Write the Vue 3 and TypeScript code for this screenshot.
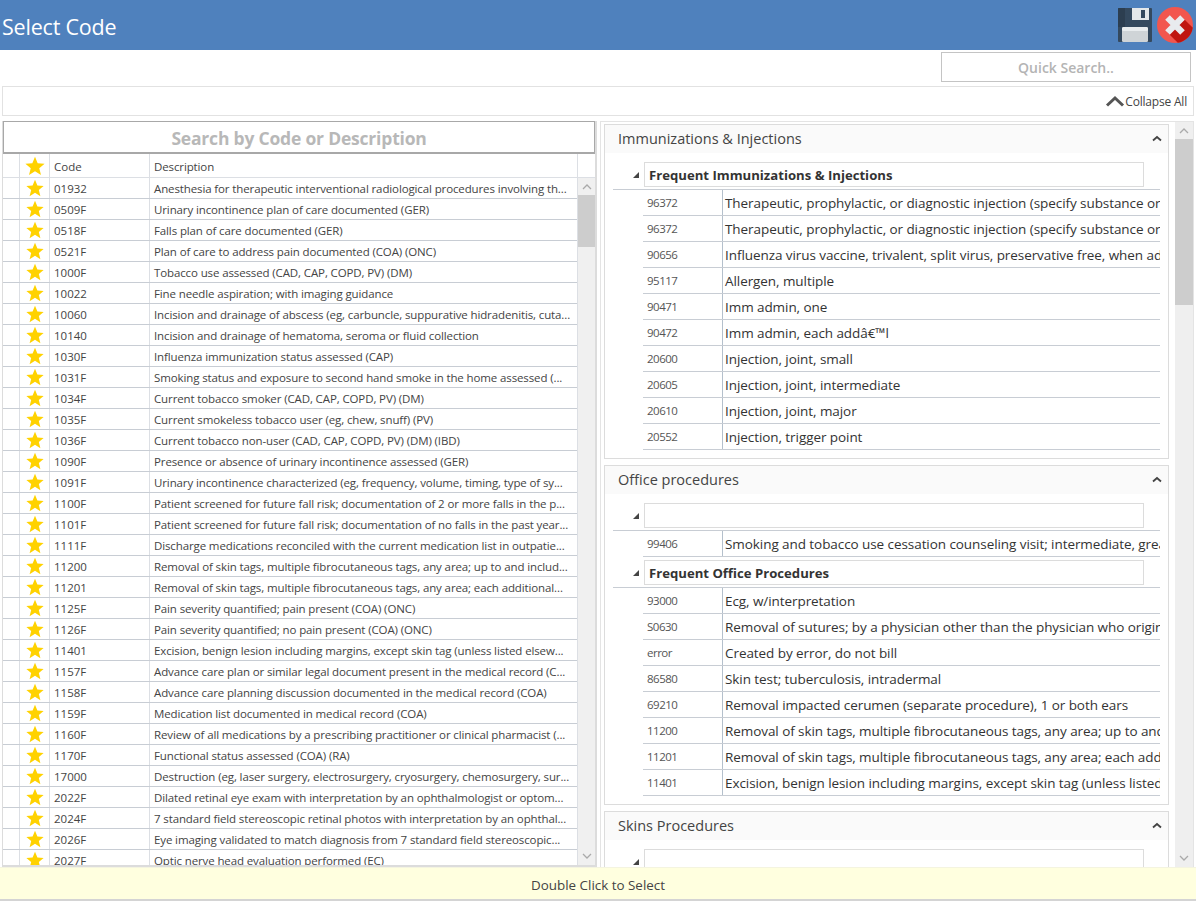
<script setup lang="ts">
const leftRows: [string, string][] = [
  ['01932', 'Anesthesia for therapeutic interventional radiological procedures involving th...'],
  ['0509F', 'Urinary incontinence plan of care documented (GER)'],
  ['0518F', 'Falls plan of care documented (GER)'],
  ['0521F', 'Plan of care to address pain documented (COA) (ONC)'],
  ['1000F', 'Tobacco use assessed (CAD, CAP, COPD, PV) (DM)'],
  ['10022', 'Fine needle aspiration; with imaging guidance'],
  ['10060', 'Incision and drainage of abscess (eg, carbuncle, suppurative hidradenitis, cuta...'],
  ['10140', 'Incision and drainage of hematoma, seroma or fluid collection'],
  ['1030F', 'Influenza immunization status assessed (CAP)'],
  ['1031F', 'Smoking status and exposure to second hand smoke in the home assessed (...'],
  ['1034F', 'Current tobacco smoker (CAD, CAP, COPD, PV) (DM)'],
  ['1035F', 'Current smokeless tobacco user (eg, chew, snuff) (PV)'],
  ['1036F', 'Current tobacco non-user (CAD, CAP, COPD, PV) (DM) (IBD)'],
  ['1090F', 'Presence or absence of urinary incontinence assessed (GER)'],
  ['1091F', 'Urinary incontinence characterized (eg, frequency, volume, timing, type of sy...'],
  ['1100F', 'Patient screened for future fall risk; documentation of 2 or more falls in the p...'],
  ['1101F', 'Patient screened for future fall risk; documentation of no falls in the past year...'],
  ['1111F', 'Discharge medications reconciled with the current medication list in outpatie...'],
  ['11200', 'Removal of skin tags, multiple fibrocutaneous tags, any area; up to and includ...'],
  ['11201', 'Removal of skin tags, multiple fibrocutaneous tags, any area; each additional...'],
  ['1125F', 'Pain severity quantified; pain present (COA) (ONC)'],
  ['1126F', 'Pain severity quantified; no pain present (COA) (ONC)'],
  ['11401', 'Excision, benign lesion including margins, except skin tag (unless listed elsew...'],
  ['1157F', 'Advance care plan or similar legal document present in the medical record (C...'],
  ['1158F', 'Advance care planning discussion documented in the medical record (COA)'],
  ['1159F', 'Medication list documented in medical record (COA)'],
  ['1160F', 'Review of all medications by a prescribing practitioner or clinical pharmacist (...'],
  ['1170F', 'Functional status assessed (COA) (RA)'],
  ['17000', 'Destruction (eg, laser surgery, electrosurgery, cryosurgery, chemosurgery, sur...'],
  ['2022F', 'Dilated retinal eye exam with interpretation by an ophthalmologist or optom...'],
  ['2024F', '7 standard field stereoscopic retinal photos with interpretation by an ophthal...'],
  ['2026F', 'Eye imaging validated to match diagnosis from 7 standard field stereoscopic...'],
  ['2027F', 'Optic nerve head evaluation performed (EC)'],
]

interface Group { name: string; rows: [string, string][] }
interface Card { title: string; groups: Group[] }

const cards: Card[] = [
  {
    title: 'Immunizations & Injections',
    groups: [
      {
        name: 'Frequent Immunizations & Injections',
        rows: [
          ['96372', 'Therapeutic, prophylactic, or diagnostic injection (specify substance or drug); subcutaneous'],
          ['96372', 'Therapeutic, prophylactic, or diagnostic injection (specify substance or drug); subcutaneous'],
          ['90656', 'Influenza virus vaccine, trivalent, split virus, preservative free, when administered to individuals'],
          ['95117', 'Allergen, multiple'],
          ['90471', 'Imm admin, one'],
          ['90472', 'Imm admin, each addâ€™l'],
          ['20600', 'Injection, joint, small'],
          ['20605', 'Injection, joint, intermediate'],
          ['20610', 'Injection, joint, major'],
          ['20552', 'Injection, trigger point'],
        ],
      },
    ],
  },
  {
    title: 'Office procedures',
    groups: [
      {
        name: '',
        rows: [['99406', 'Smoking and tobacco use cessation counseling visit; intermediate, greater than 3 minutes']],
      },
      {
        name: 'Frequent Office Procedures',
        rows: [
          ['93000', 'Ecg, w/interpretation'],
          ['S0630', 'Removal of sutures; by a physician other than the physician who originally closed the wound'],
          ['error', 'Created by error, do not bill'],
          ['86580', 'Skin test; tuberculosis, intradermal'],
          ['69210', 'Removal impacted cerumen (separate procedure), 1 or both ears'],
          ['11200', 'Removal of skin tags, multiple fibrocutaneous tags, any area; up to and including 15 lesions'],
          ['11201', 'Removal of skin tags, multiple fibrocutaneous tags, any area; each additional 10 lesions'],
          ['11401', 'Excision, benign lesion including margins, except skin tag (unless listed elsewhere), trunk'],
        ],
      },
    ],
  },
  {
    title: 'Skins Procedures',
    groups: [{ name: '', rows: [] }],
  },
]
</script>

<template>
  <div class="app">
    <header class="titlebar">
      <span class="title">Select Code</span>
      <div class="actions">
        <svg width="36" height="36" viewBox="0 0 36 36">
          <path d="M2 1h32a1 1 0 0 1 1 1v32a1 1 0 0 1-1 1H2a1 1 0 0 1-1-1V2a1 1 0 0 1 1-1z" fill="#34495e" />
          <path d="M2 1h6v19H1V2a1 1 0 0 1 1-1z" fill="#2c3e50" />
          <rect x="15" y="1" width="17" height="12" fill="#e4e8ea" />
          <rect x="24" y="3" width="4" height="8" fill="#34495e" />
          <rect x="5" y="20" width="26" height="15" rx="1.5" fill="#cfd4d7" />
          <rect x="5" y="20" width="26" height="4" rx="1.5" fill="#e8ecee" />
        </svg>
        <svg width="36" height="36" viewBox="0 0 36 36">
          <circle cx="18" cy="18" r="18" fill="#f2564e" />
          <path d="M25.500 10.500 35.800 20.800A18 18 0 0 1 20.800 35.800L10.500 25.500z" fill="#c0150f" />
          <path d="M10.500 10.500 25.500 25.500M25.500 10.500 10.500 25.500" fill="none" stroke="#e8ebee" stroke-width="6.500" />
        </svg>
      </div>
    </header>

    <div class="search-row">
      <div class="quick">Quick Search..</div>
    </div>

    <div class="collapse-bar">
      <svg width="20" height="12" viewBox="0 0 20 12"><path d="M2 10.500 10 3l8 7.500" fill="none" stroke="#555" stroke-width="3" /></svg>
      <span>Collapse All</span>
    </div>

    <main class="main">
      <section class="left">
        <div class="search-code">Search by Code or Description</div>
        <div class="grid-wrap">
          <div class="grid">
            <div class="row head">
              <div class="c-blank"></div>
              <div class="c-star">
                <svg width="20" height="20" viewBox="0 0 24 24"><path d="M12 1l3.200 7.800 8.300.6-6.400 5.300 2.100 8.200L12 18.400l-7.200 4.500 2.100-8.200L.5 9.400l8.300-.6z" fill="#ffd200" /></svg>
              </div>
              <div class="c-code">Code</div>
              <div class="c-desc">Description</div>
            </div>
            <div v-for="(r, i) in leftRows" :key="i" class="row">
              <div class="c-blank"></div>
              <div class="c-star">
                <svg width="18" height="18" viewBox="0 0 24 24"><path d="M12 1l3.200 7.800 8.300.6-6.400 5.300 2.100 8.200L12 18.400l-7.200 4.500 2.100-8.200L.5 9.400l8.300-.6z" fill="#ffd200" /></svg>
              </div>
              <div class="c-code">{{ r[0] }}</div>
              <div class="c-desc">{{ r[1] }}</div>
            </div>
          </div>
          <div class="scroll left-scroll">
            <div class="head-gap"></div>
            <div class="track">
              <svg class="arrow" width="18" height="17" viewBox="0 0 18 17"><path d="M5 11l4-4 4 4" fill="none" stroke="#aaa" stroke-width="1.300" /></svg>
              <div class="thumb left-thumb"></div>
              <div class="spring"></div>
              <svg class="arrow" width="18" height="17" viewBox="0 0 18 17"><path d="M5 6l4 4 4-4" fill="none" stroke="#aaa" stroke-width="1.300" /></svg>
            </div>
          </div>
        </div>
      </section>

      <section class="right">
        <div class="cards">
          <div v-for="card in cards" :key="card.title" class="card">
            <div class="card-head">
              <span>{{ card.title }}</span>
              <svg width="10" height="7" viewBox="0 0 10 7"><path d="M1 5.500 5 2l4 3.500" fill="none" stroke="#444" stroke-width="1.800" /></svg>
            </div>
            <div class="card-body">
              <div v-for="(g, gi) in card.groups" :key="gi" class="group">
                <div class="group-head">
                  <i class="tri"></i>
                  <div class="group-name">{{ g.name }}</div>
                </div>
                <div v-for="(r, ri) in g.rows" :key="ri" class="code-row">
                  <div class="rc">{{ r[0] }}</div>
                  <div class="rd">{{ r[1] }}</div>
                </div>
              </div>
            </div>
          </div>
        </div>
        <div class="scroll right-scroll">
          <div class="track">
            <svg class="arrow" width="18" height="17" viewBox="0 0 18 17"><path d="M5 11l4-4 4 4" fill="none" stroke="#aaa" stroke-width="1.300" /></svg>
            <div class="thumb right-thumb"></div>
            <div class="spring"></div>
            <svg class="arrow" width="18" height="17" viewBox="0 0 18 17"><path d="M5 6l4 4 4-4" fill="none" stroke="#aaa" stroke-width="1.300" /></svg>
          </div>
        </div>
      </section>
    </main>

    <footer class="footer">Double Click to Select</footer>
  </div>
</template>

<style>
html, body { margin: 0; background: #fff; overflow: hidden; }
</style>

<style scoped>
.app {
  width: 1196px;
  height: 901px;
  display: flex;
  flex-direction: column;
  overflow: hidden;
  font-family: "Open Sans", "Noto Sans", sans-serif;
  color: #444;
  background: #fff;
}
.titlebar {
  height: 50px;
  flex: none;
  background: #4f81bd;
  display: flex;
  align-items: center;
  justify-content: space-between;
  padding: 0 3px 0 2px;
}
.title { color: #fff; font-size: 21.5px; letter-spacing: -0.2px; padding-top: 2px; }
.actions { display: flex; gap: 4px; }
.actions svg { display: block; }
.search-row {
  height: 36px;
  flex: none;
  display: flex;
  justify-content: flex-end;
  align-items: flex-end;
  padding-right: 5px;
  box-sizing: border-box;
  padding-bottom: 4px;
}
.quick {
  width: 250px;
  height: 30px;
  box-sizing: border-box;
  border: 1px solid #c4c4c4;
  color: #b4b4b4;
  font-size: 14px;
  font-weight: 600;
  display: flex;
  align-items: center;
  justify-content: center;
}
.collapse-bar {
  height: 30px;
  flex: none;
  box-sizing: border-box;
  margin: 0 2px;
  border: 1px solid #e2e2e2;
  display: flex;
  align-items: center;
  justify-content: flex-end;
  padding: 0 6px 0 0;
  font-size: 12px;
  letter-spacing: -0.2px;
}
.main {
  flex: 1;
  min-height: 0;
  display: flex;
  padding: 5px 2px 0 2px;
  gap: 3px;
  overflow: hidden;
}
.left {
  width: 595px;
  flex: none;
  box-sizing: border-box;
  display: flex;
  flex-direction: column;
  min-height: 0;
  overflow: hidden;
  border-left: 1px solid #dcdcdc;
  border-right: 2px solid #dcdcdc;
  border-bottom: 2px solid #dcdcdc;
}
.search-code {
  height: 33px;
  flex: none;
  box-sizing: border-box;
  border: 1px solid #a8a8a8;
  border-bottom-width: 2px;
  color: #b8b8b8;
  font-size: 17.5px;
  font-weight: 700;
  display: flex;
  align-items: center;
  justify-content: center;
  letter-spacing: -0.2px;
  padding-top: 2px;
}
.grid-wrap {
  flex: 1;
  min-height: 0;
  display: flex;
  overflow: hidden;
}
.grid {
  width: 574px;
  flex: none;
  overflow: hidden;
}
.row {
  display: flex;
  height: 21px;
  box-sizing: border-box;
  border-bottom: 1px solid #c8cdd4;
  font-size: 11.5px;
  line-height: 22px;
  white-space: nowrap;
}
.row.head {
  height: 24px;
  line-height: 26px;
  border-bottom-color: #dcdfe4;
}
.c-blank { width: 17px; flex: none; box-sizing: border-box; border-right: 1px solid #dcdfe4; }
.c-star {
  width: 30px;
  flex: none;
  box-sizing: border-box;
  border-right: 1px solid #dcdfe4;
  display: flex;
  align-items: center;
  justify-content: center;
}
.c-code {
  width: 100px;
  flex: none;
  box-sizing: border-box;
  border-right: 1px solid #dcdfe4;
  padding-left: 4px;
}
.c-desc {
  flex: 1;
  min-width: 0;
  padding-left: 4px;
  overflow: hidden;
  letter-spacing: -0.12px;
}
.scroll { flex: none; width: 18px; display: flex; flex-direction: column; }
.head-gap {
  height: 24px;
  flex: none;
  box-sizing: border-box;
  border-bottom: 1px solid #dcdfe4;
}
.left-scroll { border-left: 1px solid #dcdfe4; box-sizing: content-box; width: 17px; }
.track {
  flex: 1;
  min-height: 0;
  background: #efefef;
  display: flex;
  flex-direction: column;
}
.left-scroll .track { background: #f0f0f0; }
.arrow { display: block; flex: none; }
.thumb { background: #cdcdcd; flex: none; }
.left-thumb { height: 52px; }
.right-thumb { height: 166px; }
.spring { flex: 1; }
.right {
  flex: 1;
  min-width: 0;
  display: flex;
  border: 1px solid #e4e4e4;
  border-bottom: none;
  padding-left: 3px;
  overflow: hidden;
}
.cards {
  flex: 1;
  min-width: 0;
  overflow: hidden;
  padding: 2px 6px 0 0;
  display: flex;
  flex-direction: column;
  gap: 6px;
}
.card {
  flex: none;
  border: 1px solid #dcdcdc;
  padding-bottom: 8px;
}
.card-head {
  height: 28px;
  box-sizing: border-box;
  background: #fafafa;
  display: flex;
  align-items: center;
  justify-content: space-between;
  padding: 0 6px 2px 13px;
  font-size: 14.5px;
  font-weight: 500;
  margin-bottom: 9px;
}
.card-body { padding: 0 8px; }
.group { display: flex; flex-direction: column; }
.group + .group { margin-top: 3px; }
.group-head {
  height: 28px;
  box-sizing: border-box;
  border-bottom: 1px solid #c8cdd4;
  padding-left: 31px;
  display: flex;
  align-items: flex-start;
  position: relative;
}
.tri {
  position: absolute;
  left: 20px;
  top: 10px;
  width: 0;
  height: 0;
  border-style: solid;
  border-width: 0 0 6px 6px;
  border-color: transparent transparent #444 transparent;
}
.group-name {
  width: 500px;
  height: 25px;
  box-sizing: border-box;
  border: 1px solid #dcdcdc;
  padding-left: 4px;
  font-size: 13.15px;
  line-height: 24px;
  font-weight: 700;
  color: #333;
}
.code-row {
  height: 26px;
  box-sizing: border-box;
  margin-left: 30px;
  border-bottom: 1px solid #c8cdd4;
  display: flex;
  white-space: nowrap;
  overflow: hidden;
}
.rc {
  width: 80px;
  flex: none;
  box-sizing: border-box;
  border-right: 1px solid #b4c0cc;
  padding-left: 4px;
  font-size: 11.5px;
  letter-spacing: -0.5px;
  line-height: 26px;
  color: #555;
}
.rd {
  flex: 1;
  min-width: 0;
  overflow: hidden;
  padding-left: 2px;
  font-size: 13.5px;
  letter-spacing: -0.07px;
  line-height: 26px;
  color: #333;
}
.footer {
  height: 34px;
  flex: none;
  box-sizing: border-box;
  background: #ffffdf;
  border-top: 1px solid #f4f4e0;
  border-bottom: 2px solid #d4d4d4;
  display: flex;
  align-items: center;
  justify-content: center;
  padding-top: 2px;
  font-size: 13.4px;
  color: #444;
}
</style>
